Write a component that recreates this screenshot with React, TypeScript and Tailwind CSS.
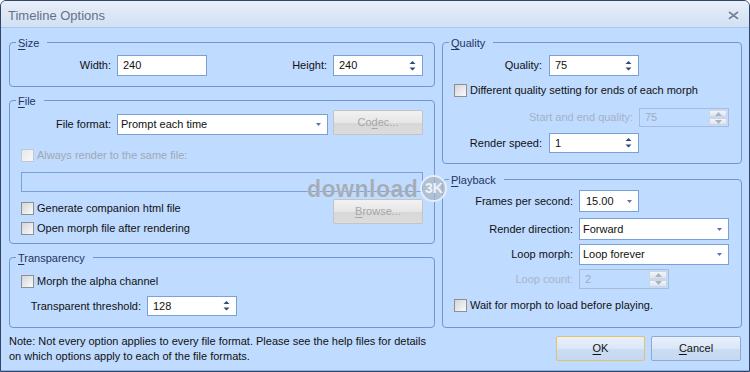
import React from "react";

const font = "font-['Liberation_Sans',Arial,sans-serif]";

function Ul({ children }: { children: React.ReactNode }) {
  return <span className="underline underline-offset-[2px]">{children}</span>;
}

function Group({
  title,
  className,
  children,
}: {
  title: React.ReactNode;
  className?: string;
  children?: React.ReactNode;
}) {
  return (
    <div className={`relative rounded-[4px] border border-[#7097d1] ${className ?? ""}`}>
      <span className="absolute -top-[7px] left-[6px] bg-[#bfdbff] pl-[2px] pr-[8px] leading-[14px] text-[#1e3461]">
        {title}
      </span>
      {children}
    </div>
  );
}

function SpinArrows({ color }: { color: string }) {
  return (
    <svg width="7" height="12" viewBox="0 0 7 12" className="shrink-0">
      <path d="M3.5 1 L6.5 4 L0.5 4 Z" fill={color} />
      <path d="M0.5 7.5 L6.5 7.5 L3.5 10.5 Z" fill={color} />
    </svg>
  );
}

function DropArrow() {
  return (
    <svg width="5" height="3" viewBox="0 0 5 3" className="shrink-0">
      <path d="M0 0 L5 0 L2.5 3 Z" fill="#5674b4" />
    </svg>
  );
}

function Spin({ value, className }: { value: string; className: string }) {
  return (
    <div
      className={`flex items-center justify-between border border-[#7aa0d8] bg-white pl-[5px] pr-[6px] ${className}`}
    >
      <span>{value}</span>
      <SpinArrows color="#2b4a7c" />
    </div>
  );
}

function DisabledSpin({ value, className }: { value: string; className: string }) {
  return (
    <div className={`flex items-stretch border border-[#a6bcdb] ${className}`}>
      <span className="flex flex-1 items-center pl-[5px] text-[#9cadc3]">{value}</span>
      <div className="my-[1px] mr-[1px] flex w-[18px] flex-col gap-[1px]">
        <div className="flex flex-1 items-center justify-center border border-[#ccd5e1] bg-linear-to-b from-[#f3f5f8] to-[#dfe4ea]">
          <svg width="7" height="4" viewBox="0 0 7 4">
            <path d="M3.5 0 L7 4 L0 4 Z" fill="#aab4c1" />
          </svg>
        </div>
        <div className="flex flex-1 items-center justify-center border border-[#ccd5e1] bg-linear-to-b from-[#f3f5f8] to-[#dfe4ea]">
          <svg width="7" height="4" viewBox="0 0 7 4">
            <path d="M0 0 L7 0 L3.5 4 Z" fill="#aab4c1" />
          </svg>
        </div>
      </div>
    </div>
  );
}

function Select({ value, className, pl = "pl-[3px]" }: { value: string; className: string; pl?: string }) {
  return (
    <div
      className={`flex items-center justify-between border border-[#7aa0d8] bg-white pr-[6px] ${pl} ${className}`}
    >
      <span>{value}</span>
      <DropArrow />
    </div>
  );
}

function Check({ label, disabled }: { label: React.ReactNode; disabled?: boolean }) {
  return (
    <div className="flex h-[13px] items-center">
      <div
        className={`h-[13px] w-[13px] shrink-0 border ${
          disabled
            ? "border-[#c2c8cf] bg-linear-to-br from-[#e6e9ed] to-[#f6f7f8]"
            : "border-[#8d8f91] bg-linear-to-br from-[#d3d5d8] to-[#fbfbfb]"
        }`}
      />
      <span className={`ml-[3px] whitespace-nowrap ${disabled ? "text-[#a2a8b0]" : ""}`}>{label}</span>
    </div>
  );
}

function GrayButton({ children }: { children: React.ReactNode }) {
  return (
    <div className="flex h-[25px] w-[90px] items-center justify-center rounded-[2px] border border-[#c4c4c4] bg-[linear-gradient(to_bottom,#f2f2f2_0%,#e6e6e6_50%,#d7d7d7_51%,#dcdcdc_100%)] text-[#a6a6a6]">
      {children}
    </div>
  );
}

function BlueButton({ children, def, w }: { children: React.ReactNode; def?: boolean; w: string }) {
  return (
    <div
      className={`flex h-[25px] items-center justify-center rounded-[2px] border ${w} ${
        def ? "border-[#e3c465]" : "border-[#8ea9d2]"
      } bg-[linear-gradient(to_bottom,#e8f0fb_0%,#dbe7f7_50%,#cbddf3_51%,#c6d9f2_100%)] text-[#111]`}
    >
      {children}
    </div>
  );
}

export default function App() {
  return (
    <div className="h-[372px] w-[750px] bg-white">
      <div
        className={`${font} relative flex h-[372px] w-[750px] flex-col overflow-hidden rounded-t-[6px] border border-[#2f4466] bg-[#bfdbff] text-[11px] leading-[13px] text-[#111]`}
      >
        {/* Title bar */}
        <div className="flex h-[27px] shrink-0 justify-between border-b border-[#a9c7ef] bg-linear-to-b from-[#e7eff9] to-[#d2e0f3] pl-[7px] pr-[10px] pt-[4px]">
          <span className="self-center text-[13px] leading-[16px] text-[#667089]">Timeline Options</span>
          <svg width="11" height="9" viewBox="0 0 11 9" className="mt-[6px] self-start">
            <path d="M1 1 L10 8 M10 1 L1 8" stroke="#ffffff" strokeWidth="2.2" transform="translate(0 0.8)" />
            <path d="M1 1 L10 8 M10 1 L1 8" stroke="#7887a3" strokeWidth="2.2" />
          </svg>
        </div>

        {/* Body */}
        <div className="flex flex-1 flex-col border-b border-[#8fb0dc] pl-[8px] pr-[7px] pt-[14px]">
          <div className="flex gap-[7px]">
            {/* Left column */}
            <div className="flex w-[426px] flex-col">
              <Group
                title={
                  <>
                    <Ul>S</Ul>ize
                  </>
                }
                className="h-[45px] pt-[12px]"
              >
                <div className="flex h-[21px] items-center">
                  <div className="w-[101px] text-right">Width:</div>
                  <Spin value="240" className="ml-[6px] h-[21px] w-[90px] [&>svg]:hidden" />
                  <div className="ml-auto mr-[11px] flex items-center">
                    <span>Height:</span>
                    <Spin value="240" className="ml-[6px] h-[21px] w-[90px]" />
                  </div>
                </div>
              </Group>

              <Group
                title={
                  <>
                    <Ul>F</Ul>ile
                  </>
                }
                className="mt-[13px] flex h-[144px] flex-col pt-[9px]"
              >
                <div className="flex items-end">
                  <div className="flex items-center">
                    <div className="w-[101px] text-right">File format:</div>
                    <Select value="Prompt each time" className="ml-[6px] h-[21px] w-[211px]" />
                  </div>
                  <div className="ml-[5px]">
                    <GrayButton>
                      <span>
                        Co<Ul>d</Ul>ec...
                      </span>
                    </GrayButton>
                  </div>
                </div>
                <div className="mt-[14px] pl-[11px]">
                  <Check label="Always render to the same file:" disabled />
                </div>
                <div className="ml-[11px] mt-[10px] h-[20px] w-[402px] border border-[#7aa0d8]" />
                <div className="mt-[7px] flex">
                  <div className="flex flex-col gap-[7px] pl-[11px] pt-[3px]">
                    <Check label="Generate companion html file" />
                    <Check label="Open morph file after rendering" />
                  </div>
                  <div className="ml-auto mr-[11px]">
                    <GrayButton>
                      <span>
                        <Ul>B</Ul>rowse...
                      </span>
                    </GrayButton>
                  </div>
                </div>
              </Group>

              <Group
                title={
                  <>
                    <Ul>T</Ul>ransparency
                  </>
                }
                className="mt-[13px] flex h-[71px] flex-col pt-[17px]"
              >
                <div className="pl-[11px]">
                  <Check label="Morph the alpha channel" />
                </div>
                <div className="mt-[8px] flex items-center">
                  <div className="w-[131px] text-right">Transparent threshold:</div>
                  <Spin value="128" className="ml-[6px] h-[20px] w-[90px]" />
                </div>
              </Group>
            </div>

            {/* Right column */}
            <div className="flex w-[300px] flex-col">
              <Group
                title={
                  <>
                    <Ul>Q</Ul>uality
                  </>
                }
                className="flex h-[122px] flex-col pt-[12px]"
              >
                <div className="flex items-center">
                  <div className="w-[99px] text-right">Quality:</div>
                  <Spin value="75" className="ml-[7px] h-[21px] w-[90px]" />
                </div>
                <div className="mt-[8px] pl-[11px]">
                  <Check label="Different quality setting for ends of each morph" />
                </div>
                <div className="mt-[11px] flex items-center">
                  <div className="w-[190px] text-right text-[#a3b2c6]">Start and end quality:</div>
                  <DisabledSpin value="75" className="ml-[6px] h-[19px] w-[90px]" />
                </div>
                <div className="mt-[6px] flex items-center">
                  <div className="w-[99px] text-right">Render speed:</div>
                  <Spin value="1" className="ml-[7px] h-[20px] w-[90px]" />
                </div>
              </Group>

              <Group
                title={
                  <>
                    <Ul>P</Ul>layback
                  </>
                }
                className="mt-[15px] flex h-[149px] flex-col pt-[10px]"
              >
                <div className="flex items-center">
                  <div className="w-[130px] text-right">Frames per second:</div>
                  <Select value="15.00" pl="pl-[6px]" className="ml-[6px] h-[22px] w-[60px]" />
                </div>
                <div className="mt-[6px] flex items-center">
                  <div className="w-[130px] text-right">Render direction:</div>
                  <Select value="Forward" className="ml-[6px] h-[22px] w-[150px]" />
                </div>
                <div className="mt-[4px] flex items-center">
                  <div className="w-[130px] text-right">Loop morph:</div>
                  <Select value="Loop forever" className="ml-[6px] h-[21px] w-[150px]" />
                </div>
                <div className="mt-[4px] flex items-center">
                  <div className="w-[130px] text-right text-[#a9b6c7]">Loop count:</div>
                  <DisabledSpin value="2" className="ml-[6px] h-[20px] w-[90px]" />
                </div>
                <div className="mt-[10px] pl-[11px]">
                  <Check label="Wait for morph to load before playing." />
                </div>
              </Group>
            </div>
          </div>

          {/* Bottom row */}
          <div className="flex">
            <p className="mt-[6px] whitespace-nowrap leading-[15px]">
              Note: Not every option applies to every file format. Please see the help files for details
              <br />
              on which options apply to each of the file formats.
            </p>
            <div className="ml-auto mr-[1px] mt-[8px] flex gap-[6px]">
              <BlueButton def w="w-[89px]">
                <span>
                  <Ul>O</Ul>K
                </span>
              </BlueButton>
              <BlueButton w="w-[90px]">
                <span>
                  <Ul>C</Ul>ancel
                </span>
              </BlueButton>
            </div>
          </div>
        </div>

        {/* Watermark overlay */}
        <div className="pointer-events-none absolute left-[306px] top-[174px] flex items-center">
          <span className="text-[23px] font-bold leading-[24px] tracking-[0.5px] text-[#a2adba] [text-shadow:0_0_1px_#e8eef6]">
            download
          </span>
          <span className="ml-[2px] flex h-[27px] w-[27px] items-center justify-center rounded-full border-[2px] border-[#e6edf7] bg-[#aab6c5]/70 text-[14px] font-bold text-[#eef3fa]">
            3K
          </span>
        </div>
      </div>
    </div>
  );
}
